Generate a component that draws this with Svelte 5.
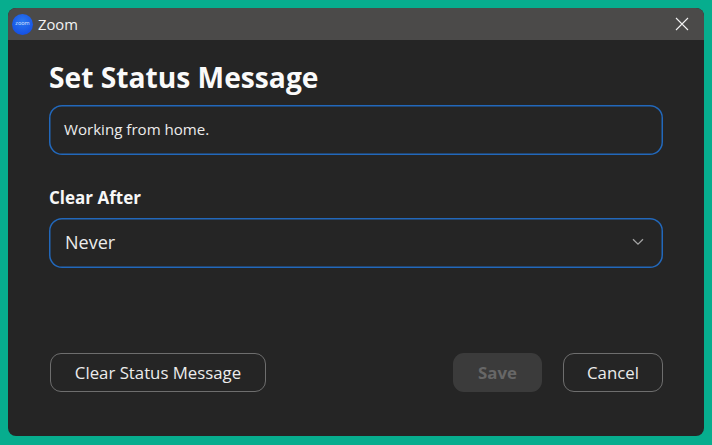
<script>
  let status = $state('Working from home.');
</script>

<div class="page">
  <div class="window">
    <header class="titlebar">
      <div class="logo"><span>zoom</span></div>
      <span class="app-name">Zoom</span>
      <svg class="close" width="14" height="14" viewBox="0 0 14 14" aria-hidden="true">
        <path d="M1 1L13 13M13 1L1 13" stroke="#f2f2f2" stroke-width="1.1" fill="none" />
      </svg>
    </header>
    <main class="content">
      <h1>Set Status Message</h1>
      <div class="field message">{status}</div>
      <h2>Clear After</h2>
      <div class="field select">
        <span>Never</span>
        <svg width="12" height="8" viewBox="0 0 12 8" aria-hidden="true">
          <path d="M1 1.2L6 6.2L11 1.2" stroke="#a3a3a3" stroke-width="1.3" fill="none" />
        </svg>
      </div>
      <footer class="actions">
        <button class="outline wide">Clear Status Message</button>
        <button class="save">Save</button>
        <button class="outline cancel">Cancel</button>
      </footer>
    </main>
  </div>
</div>

<style>
  :global(body) {
    margin: 0;
    background: #07ad8e;
  }
  .page {
    width: 712px;
    height: 445px;
    padding: 8px 8px 9px 8px;
    box-sizing: border-box;
    font-family: "Open Sans", "Noto Sans", sans-serif;
    color: #f3f3f3;
  }
  .window {
    height: 100%;
    border-radius: 8px;
    overflow: hidden;
    background: #252525;
    display: flex;
    flex-direction: column;
  }
  .titlebar {
    height: 32px;
    flex: none;
    background: #4b4a49;
    display: flex;
    align-items: center;
    padding: 0 15px 0 4px;
    box-sizing: border-box;
  }
  .logo {
    width: 21px;
    height: 21px;
    border-radius: 50%;
    background: radial-gradient(circle at 50% 35%, #2a78f0, #0f45e0);
    display: flex;
    align-items: center;
    justify-content: center;
    margin-right: 5px;
  }
  .logo span {
    font-size: 5.5px;
    line-height: 1;
    color: #dfe8ff;
  }
  .app-name {
    font-size: 14.8px;
    flex: 1;
  }
  .close {
    display: block;
  }
  .content {
    flex: 1;
    padding: 0 41px 44px 41px;
    display: flex;
    flex-direction: column;
  }
  h1 {
    margin: 17px 0 8px;
    font-size: 28.2px;
    line-height: 40px;
    font-weight: 700;
    color: #fafafa;
    height: 40px;
  }
  h2 {
    margin: 31px 0 8px;
    font-size: 17px;
    line-height: 24px;
    font-weight: 700;
    color: #f7f7f7;
  }
  .field {
    height: 50px;
    box-sizing: border-box;
    box-shadow: inset 0 0 0 1.5px #2268bb;
    border-radius: 13px;
    display: flex;
    align-items: center;
  }
  .message {
    padding: 0 15px 2px;
    font-size: 15.1px;
    color: #ececec;
  }
  .select {
    padding: 0 19px 2px 16px;
    font-size: 18px;
    justify-content: space-between;
    color: #ececec;
  }
  .actions {
    margin-top: auto;
    display: flex;
    height: 39px;
    padding-left: 1px;
  }
  button {
    font-family: inherit;
    font-size: 16.8px;
    height: 39px;
    border-radius: 11px;
    box-sizing: border-box;
    padding: 0;
    background: transparent;
    color: #ececec;
  }
  .outline {
    border: 1px solid #6e6e6e;
  }
  .wide {
    width: 216px;
    margin-right: auto;
  }
  .save {
    width: 89px;
    border: none;
    background: #3b3b3b;
    color: #676767;
    font-weight: 700;
    margin-right: 21px;
  }
  .cancel {
    width: 100px;
  }
</style>
